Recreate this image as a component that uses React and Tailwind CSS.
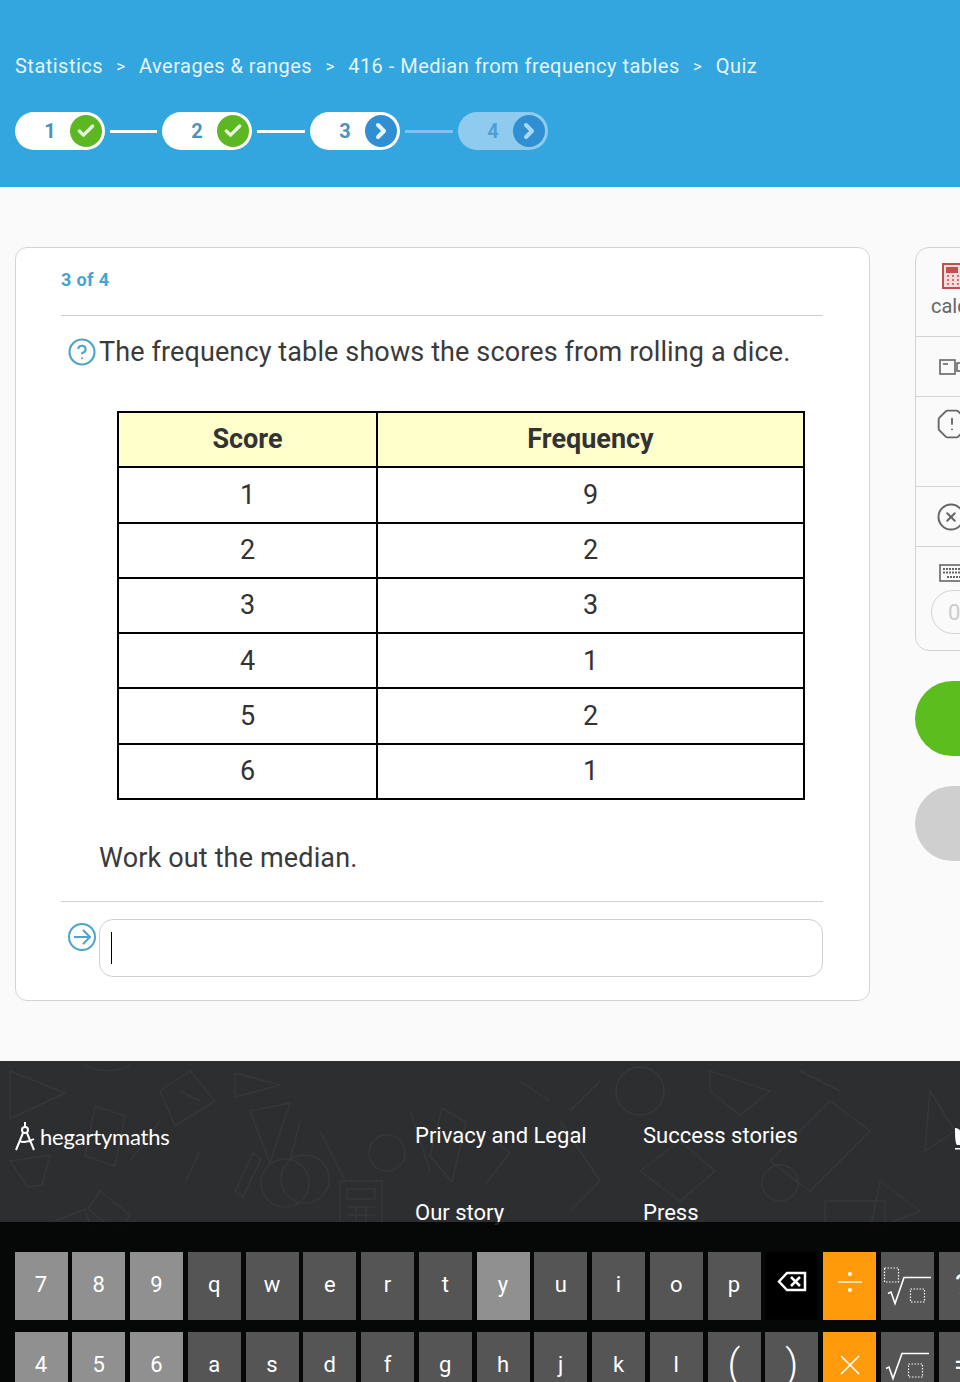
import { Check, ChevronRight, CircleHelp, OctagonAlert, CircleX, X } from "lucide-react";

const font = { fontFamily: "Roboto, sans-serif" };

const crumbs = ["Statistics", "Averages & ranges", "416 - Median from frequency tables", "Quiz"];
const rows = [[1, 9], [2, 2], [3, 3], [4, 1], [5, 2], [6, 1]];

function Step({ n, done, dim }) {
  return (
    <div className={`flex h-[38px] w-[90px] shrink-0 items-center justify-between rounded-full pl-[29px] pr-[3px] ${dim ? "bg-[#8fcbef]" : "bg-white"}`}>
      <span className={`w-[12px] text-center text-[20px] font-bold ${dim ? "text-[#4f9fd6]" : "text-[#4b92bd]"}`}>{n}</span>
      <span className={`flex h-[32px] w-[32px] items-center justify-center rounded-full ${done ? "bg-[#5cb723]" : "bg-[#2f8fd2]"}`}>
        {done
          ? <Check className="h-[20px] w-[20px] text-[#eaf6e0]" strokeWidth={4} />
          : <ChevronRight className={`h-[24px] w-[24px] ${dim ? "text-[#a9d8f3]" : "text-[#eaf5fb]"}`} strokeWidth={4} />}
      </span>
    </div>
  );
}

function Key({ children, tone = "dark" }) {
  const tones = {
    dark: "bg-[#555555]",
    light: "bg-[#909090]",
    black: "bg-black",
    orange: "bg-[#ff9a0a]",
  };
  return (
    <div className={`flex h-[68px] w-[53px] shrink-0 items-center justify-center pb-[3px] text-[22px] text-white ${tones[tone]}`}>
      {children}
    </div>
  );
}

function RootKey({ withIndex }) {
  return (
    <svg className="translate-y-[1.5px]" width="53" height="68" viewBox="0 0 53 68" fill="none" stroke="white">
      {withIndex ? (
        <>
          <rect x="3.5" y="15.5" width="14" height="14" strokeDasharray="1.5 1.5" strokeWidth="1.2" />
          <path d="M7 41l3-1.5 4 11.5 9-26h27" strokeWidth="1.6" />
          <rect x="29.5" y="36.5" width="14" height="13" strokeDasharray="1.5 1.5" strokeWidth="1.2" />
        </>
      ) : (
        <>
          <path d="M5 36l3-1.5 4 11.5 9-25h27" strokeWidth="1.6" />
          <rect x="27.5" y="31.5" width="14" height="13" strokeDasharray="1.5 1.5" strokeWidth="1.2" />
        </>
      )}
    </svg>
  );
}

function FooterPattern() {
  return (
    <svg className="absolute inset-0 h-full w-full" viewBox="0 0 960 321" fill="none" stroke="#363739" strokeWidth="1.5">
      <path d="M10 10l55 22-55 26zM85 4a28 14 0 0 0 45 0M160 30l30-20 25 30-40 25zM235 12l45 12-45 12z" />
      <path d="M95 45l30 10-10 50-30-10zM180 30l20 10M250 50l40-8-20 60zM300 60l-10 40M320 70l25 50" />
      <circle cx="285" cy="122" r="24" />
      <circle cx="305" cy="118" r="24" />
      <circle cx="387" cy="92" r="18" />
      <rect x="340" y="120" width="42" height="50" />
      <path d="M347 128h28v10h-28zM347 146h28M347 154h28M356 146v16M366 146v16" />
      <path d="M235 130l18-38 8 6-18 38zM100 130l30 24-12 18-30-24zM10 100l40-6-8 30-14 2zM55 160l30-12 8 26" />
      <path d="M430 95l12-48 24 14-14 60zM410 50l20 60M480 70l30 22-24 30M200 90l-14 30M160 60l-30 40" />
      <circle cx="640" cy="30" r="24" />
      <circle cx="780" cy="122" r="18" />
      <path d="M710 10l60 20-30 24-30-24zM800 10l40 20M870 70l-60 60-40-30 60-60zM640 110l40-30 35 30-35 30zM825 140h60v30h-60z" />
      <path d="M560 60l40 60-30 30M930 30l25 40-30 20zM880 120l40 30-50 20zM600 20l-30 30M520 20l30 20" />
    </svg>
  );
}

export default function App() {
  return (
    <div className="relative h-[1382px] w-[960px] overflow-hidden bg-[#fafafa]" style={font}>
      <header className="h-[187px] bg-[#33a5df] pl-[15px] pt-[54px]">
        <nav className="flex h-[24px] items-center text-[20px] leading-[24px] tracking-[0.48px] text-[#e6f4fb]">
          {crumbs.map((c, i) => (
            <span key={c} className="flex items-center">
              {i > 0 && <span className="w-[36px] text-center text-[17px]">&gt;</span>}
              {c}
            </span>
          ))}
        </nav>
        <div className="mt-[34px] flex items-center">
          <Step n={1} done />
          <div className="mx-[5px] h-[3px] w-[47px] shrink-0 bg-white" />
          <Step n={2} done />
          <div className="mx-[5px] h-[3px] w-[48px] shrink-0 bg-white" />
          <Step n={3} />
          <div className="mx-[5px] h-[3px] w-[48px] shrink-0 bg-[#7cc4ee]" />
          <Step n={4} dim />
        </div>
      </header>

      <main className="flex items-start gap-[45px] pl-[15px] pt-[60px]">
        <section className="w-[855px] shrink-0 rounded-[12px] border border-[#d4d4d4] bg-white pl-[45px] pr-[46px] pb-[23px]">
          <div className="flex h-[68px] items-center border-b border-[#d0d0d0] pb-[4px] text-[18px] font-bold tracking-[0.35px] text-[#46a3cf]">3 of 4</div>
          <div className="mt-[16px] flex h-[40px] items-center pl-[6px]">
            <CircleHelp className="h-[30px] w-[30px] shrink-0 text-[#4fa3c9]" strokeWidth={1.7} />
            <p className="ml-[2px] whitespace-nowrap text-[27px] tracking-[0.12px] text-[#3a3a3a]">The frequency table shows the scores from rolling a dice.</p>
          </div>
          <table className="ml-[56px] mt-[39px] w-[688px] table-fixed border-collapse border-2 border-black text-center text-[27px] text-[#333333]">
            <thead>
              <tr className="h-[55.3px] bg-[#ffffcc] font-bold">
                <th className="w-[259px] border-2 border-black">Score</th>
                <th className="border-2 border-black">Frequency</th>
              </tr>
            </thead>
            <tbody>
              {rows.map(([s, f]) => (
                <tr key={s} className="h-[55.3px]">
                  <td className="border-2 border-black">{s}</td>
                  <td className="border-2 border-black">{f}</td>
                </tr>
              ))}
            </tbody>
          </table>
          <p className="ml-[38px] mt-[42px] h-[32px] text-[27px] leading-[32px] tracking-[0.15px] text-[#3a3a3a]">Work out the median.</p>
          <div className="mt-[27px] flex border-t border-[#d0d0d0] pl-[6px] pt-[17px]">
            <svg className="mt-[3px] shrink-0" width="30" height="30" viewBox="0 0 30 30" fill="none" stroke="#4fa3c9" strokeWidth="2">
              <circle cx="15" cy="15" r="13" />
              <path d="M7 15h16M16 8l7 7-7 7" />
            </svg>
            <div className="ml-[2px] flex h-[58px] flex-1 items-center rounded-[14px] border border-[#d0d0d0] pl-[11px]">
              <div className="h-[32px] w-px bg-black" />
            </div>
          </div>
        </section>

        <aside className="w-[220px] shrink-0">
          <div className="rounded-[14px] border border-[#d4d4d4] text-[#666666]">
            <div className="h-[89px] border-b border-[#d4d4d4] pl-[15px] pt-[15px]">
              <svg className="ml-[11px]" width="26" height="26" viewBox="0 0 26 26" fill="#f3dcdc" stroke="#c0504d" strokeWidth="2">
                <rect x="1" y="1" width="24" height="24" />
                <path d="M5 5h10v4H5z" fill="#c0504d" />
                <path d="M5 13h2M10 13h2M15 13h2M5 17h2M10 17h2M15 17h2M5 21h2M10 21h2M15 21h2" strokeWidth="1.6" />
              </svg>
              <div className="mt-[5px] text-[20px] leading-[24px]">calculator</div>
            </div>
            <div className="flex h-[60px] items-center border-b border-[#d4d4d4] pl-[23px]">
              <svg width="24" height="20" viewBox="0 0 24 20" fill="none" stroke="#666" strokeWidth="1.6">
                <rect x="1" y="3" width="15" height="14" />
                <path d="M4 7h5" />
                <rect x="18" y="6" width="5" height="8" />
              </svg>
            </div>
            <div className="h-[90px] border-b border-[#d4d4d4] pl-[20px] pt-[11px]">
              <OctagonAlert className="h-[32px] w-[32px]" strokeWidth={1.4} />
            </div>
            <div className="flex h-[60px] items-center border-b border-[#d4d4d4] pl-[20px]">
              <CircleX className="h-[30px] w-[30px]" strokeWidth={1.6} />
            </div>
            <div className="h-[103px] pl-[15px] pt-[17px]">
              <svg className="ml-[8px]" width="30" height="18" viewBox="0 0 30 18" fill="none" stroke="#666" strokeWidth="1.6">
                <rect x="1" y="1" width="28" height="16" />
                <path d="M4 5h22M4 8.5h22M8 13h14" strokeDasharray="2 1" strokeWidth="2" />
              </svg>
              <div className="mt-[8px] flex h-[44px] w-[150px] items-center rounded-full border border-[#d4d4d4] pl-[16px] text-[22px] text-[#cccccc]">0</div>
            </div>
          </div>
          <div className="mt-[30px] h-[75px] rounded-full bg-[#5cbd1e]" />
          <div className="mt-[30px] h-[75px] rounded-full bg-[#cfcfcf]" />
        </aside>
      </main>

      <footer className="relative mt-[60px] h-[321px] bg-[#2d2e30]">
        <FooterPattern />
        <div className="relative flex items-start pl-[15px] pt-[62px] text-white">
          <div className="-mt-[3px] flex h-[32px] w-[400px] shrink-0 items-center">
            <svg width="22" height="30" viewBox="0 0 22 30" fill="none" stroke="white" strokeWidth="2">
              <circle cx="10" cy="9" r="3" />
              <path d="M10 1v5M8 12L1 29M12 12l7 17M4 20c5 2 10 1 15-2" />
            </svg>
            <span className="ml-[3px] text-[22px] tracking-[-0.2px]" style={{ fontFamily: "Lato, sans-serif" }}>hegartymaths</span>
          </div>
          <div className="grid w-[456px] shrink-0 grid-cols-[228px_228px] gap-y-[51px] text-[22px] leading-[26px]">
            <span>Privacy and Legal</span>
            <span>Success stories</span>
            <span>Our story</span>
            <span>Press</span>
          </div>
          <svg className="ml-[84px] mt-[5px] shrink-0" width="26" height="26" viewBox="0 0 26 26" fill="white">
            <path d="M0 20h5v1.500H0zM0 0c2 0 5 1 5 3v14H2C0 15 0 6 0 0z" />
          </svg>
        </div>

        <div className="absolute inset-x-0 bottom-0 h-[160px] overflow-hidden bg-black/85 pl-[14.5px] pt-[30px]">
          <div className="flex gap-[4.75px]">
            {["7", "8", "9"].map((k) => <Key key={k} tone="light">{k}</Key>)}
            {["q", "w", "e", "r", "t"].map((k) => <Key key={k}>{k}</Key>)}
            <Key tone="light">y</Key>
            {["u", "i", "o", "p"].map((k) => <Key key={k}>{k}</Key>)}
            <Key tone="black">
              <svg className="-translate-y-[3px]" width="30" height="21" viewBox="0 0 30 21" fill="none" stroke="white" strokeWidth="2.5">
                <path d="M2 10.5L10 2h18v17H10z" />
                <path d="M14 6l9 9M23 6l-9 9" />
              </svg>
            </Key>
            <Key tone="orange">
              <svg className="-translate-y-[3px]" width="26" height="24" viewBox="0 0 26 24" fill="white" stroke="white">
                <path d="M1 12h24" strokeWidth="1.4" />
                <circle cx="13" cy="4" r="2" stroke="none" />
                <circle cx="13" cy="20" r="2" stroke="none" />
              </svg>
            </Key>
            <Key><RootKey withIndex /></Key>
            <Key><span className="-translate-x-[3px] text-[30px]">?</span></Key>
          </div>
          <div className="mt-[12px] flex gap-[4.75px]">
            {["4", "5", "6"].map((k) => <Key key={k} tone="light">{k}</Key>)}
            {["a", "s", "d", "f", "g", "h", "j", "k", "l"].map((k) => <Key key={k}>{k}</Key>)}
            <Key><span className="text-[40px] font-light">(</span></Key>
            <Key><span className="text-[40px] font-light">)</span></Key>
            <Key tone="orange"><X className="h-[34px] w-[34px]" strokeWidth={1.2} /></Key>
            <Key><RootKey /></Key>
            <Key><span className="-translate-x-[3px] text-[30px]">=</span></Key>
          </div>
        </div>
      </footer>
    </div>
  );
}
